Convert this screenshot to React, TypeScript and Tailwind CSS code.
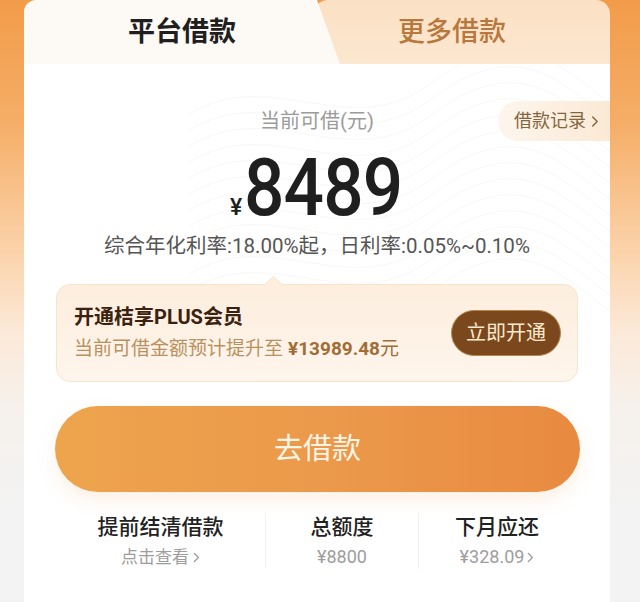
import React from "react";

const CJK = "font-['Roboto','Noto_Sans_CJK_SC',sans-serif]";

function Chevron({ className }: { className?: string }) {
  return (
    <svg viewBox="0 0 10 16" className={className} fill="none" stroke="currentColor" strokeWidth="1.6" strokeLinecap="round" strokeLinejoin="round">
      <path d="M3 3l5 5-5 5" />
    </svg>
  );
}

function Waves() {
  const lines = [];
  for (let i = 0; i < 14; i++) {
    const y = 10 + i * 16;
    lines.push(
      <path
        key={i}
        d={`M0 ${y + 40} C 80 ${y - 10}, 160 ${y + 70}, 240 ${y + 10} S 360 ${y - 20}, 420 ${y + 30}`}
        stroke="#f1ece6"
        strokeWidth="1"
        fill="none"
      />
    );
  }
  return (
    <svg className="absolute right-0 top-0 w-[420px] h-[300px] opacity-35" viewBox="0 0 420 300">
      {lines}
    </svg>
  );
}

export default function App() {
  return (
    <div className={`w-[640px] h-[602px] overflow-hidden pl-[24px] pr-[30px] bg-[linear-gradient(180deg,#f29c4a_0%,#f5ad66_20%,#fbd3ab_42%,#fce9d8_55%,#f6f1ec_68%,#f3f3f3_85%,#f3f3f3_100%)] ${CJK}`}>
      <div className="w-[586px] h-full flex flex-col">
        {/* tabs */}
        <div className="relative h-[64px] flex shrink-0">
          <div className="absolute inset-y-0 left-[290px] right-0 rounded-t-[14px] bg-[linear-gradient(180deg,#fbe1c4_0%,#fce7d0_100%)]" />
          <div className="relative w-[316px] rounded-tl-[12px] bg-[#fdf9f5] [clip-path:polygon(0_0,293px_0,316px_100%,0_100%)] flex items-center justify-center">
            <span className="text-[27px] font-bold text-[#1f1f1f] leading-none">平台借款</span>
          </div>
          <div className="relative flex-1 flex items-center pl-[58px]">
            <span className="text-[27px] font-medium text-[#b8773c] leading-none">更多借款</span>
          </div>
        </div>

        {/* body */}
        <div className="relative flex-1 bg-white flex flex-col">
          <Waves />
          <div className="relative grid grid-cols-[1fr_auto_1fr] items-center pt-[37px]">
            <div />
            <div className="text-[20px] leading-[28px] text-[#9b9b9b]">当前可借(元)</div>
            <div className="justify-self-end h-[40px] w-[112px] rounded-l-full bg-[linear-gradient(90deg,#fdf6ee_0%,#fbe9d5_100%)] flex items-center pl-[16px] gap-[4px] text-[#86663d]">
              <span className="text-[18px] leading-none">借款记录</span>
              <Chevron className="w-[9px] h-[15px]" />
            </div>
          </div>

          <div className="relative flex justify-center items-baseline mt-[7px] h-[80px] leading-[80px] text-[#1f1f1f] pr-[2px]">
            <span className="text-[23px] font-medium mr-[2px] font-['Roboto',sans-serif]">¥</span>
            <span className="inline-block text-[80px] font-medium font-['Roboto',sans-serif] scale-x-[0.89] origin-left -mr-[20px] tracking-[-1px]">8489</span>
          </div>

          <div className="relative text-center text-[20.5px] leading-[28px] text-[#555] mt-[4px]">
            综合年化利率:18.00%起，日利率:0.05%~0.10%
          </div>

          {/* plus card */}
          <div className="relative mt-[24px] mx-[32px] h-[98px] rounded-[14px] border border-[#f7e4cf] bg-[linear-gradient(180deg,#fdeede_0%,#fef5ec_100%)] flex items-center justify-between pl-[17px] pr-[16px]">
            <div className="absolute -top-[7px] left-[210px] w-[13px] h-[13px] rotate-45 bg-[#fdeede] border-l border-t border-[#f7e4cf] rounded-tl-[2px]" />
            <div className="flex flex-col gap-[6px]">
              <div className="text-[20px] leading-[26px] font-bold text-[#3b2210]">开通桔享PLUS会员</div>
              <div className="text-[19px] leading-[26px] text-[#b8915f] flex items-baseline">
                <span>当前可借金额预计提升至</span>
                <span className="ml-[5px] font-bold text-[#a06d36]">¥13989.48</span>
                <span className="text-[#a06d36]">元</span>
              </div>
            </div>
            <div className="h-[46px] w-[110px] rounded-full bg-[#7a481c] border border-[#b88750] flex items-center justify-center text-[20px] text-[#fde8cf] leading-none">
              立即开通
            </div>
          </div>

          {/* go button */}
          <div className="relative mt-[24px] ml-[31px] w-[525px] h-[86px] rounded-full bg-[linear-gradient(90deg,#eea44d_0%,#eb984a_55%,#e88a40_100%)] shadow-[0_8px_18px_rgba(240,160,90,0.16)] flex items-center justify-center">
            <span className="text-[29px] text-[#fff5e6] leading-none">去借款</span>
          </div>

          {/* stats */}
          <div className="relative mt-[21px] ml-[32px] grid grid-cols-[209px_153px_157px]">
            <div className="flex flex-col items-center">
              <div className="text-[21px] leading-[28px] font-medium text-[#222]">提前结清借款</div>
              <div className="mt-[4px] text-[17px] leading-[24px] text-[#9d9d9d] flex items-center gap-[3px]">
                <span>点击查看</span>
                <Chevron className="w-[8px] h-[13px]" />
              </div>
            </div>
            <div className="flex flex-col items-center border-l border-[#f1f1f1]">
              <div className="text-[21px] leading-[28px] font-medium text-[#222]">总额度</div>
              <div className="mt-[4px] text-[18px] leading-[24px] text-[#9d9d9d]">¥8800</div>
            </div>
            <div className="flex flex-col items-center border-l border-[#f1f1f1]">
              <div className="text-[21px] leading-[28px] font-medium text-[#222]">下月应还</div>
              <div className="mt-[4px] text-[18px] leading-[24px] text-[#9d9d9d] flex items-center gap-[2px]">
                <span>¥328.09</span>
                <Chevron className="w-[8px] h-[13px]" />
              </div>
            </div>
          </div>
        </div>
      </div>
    </div>
  );
}
